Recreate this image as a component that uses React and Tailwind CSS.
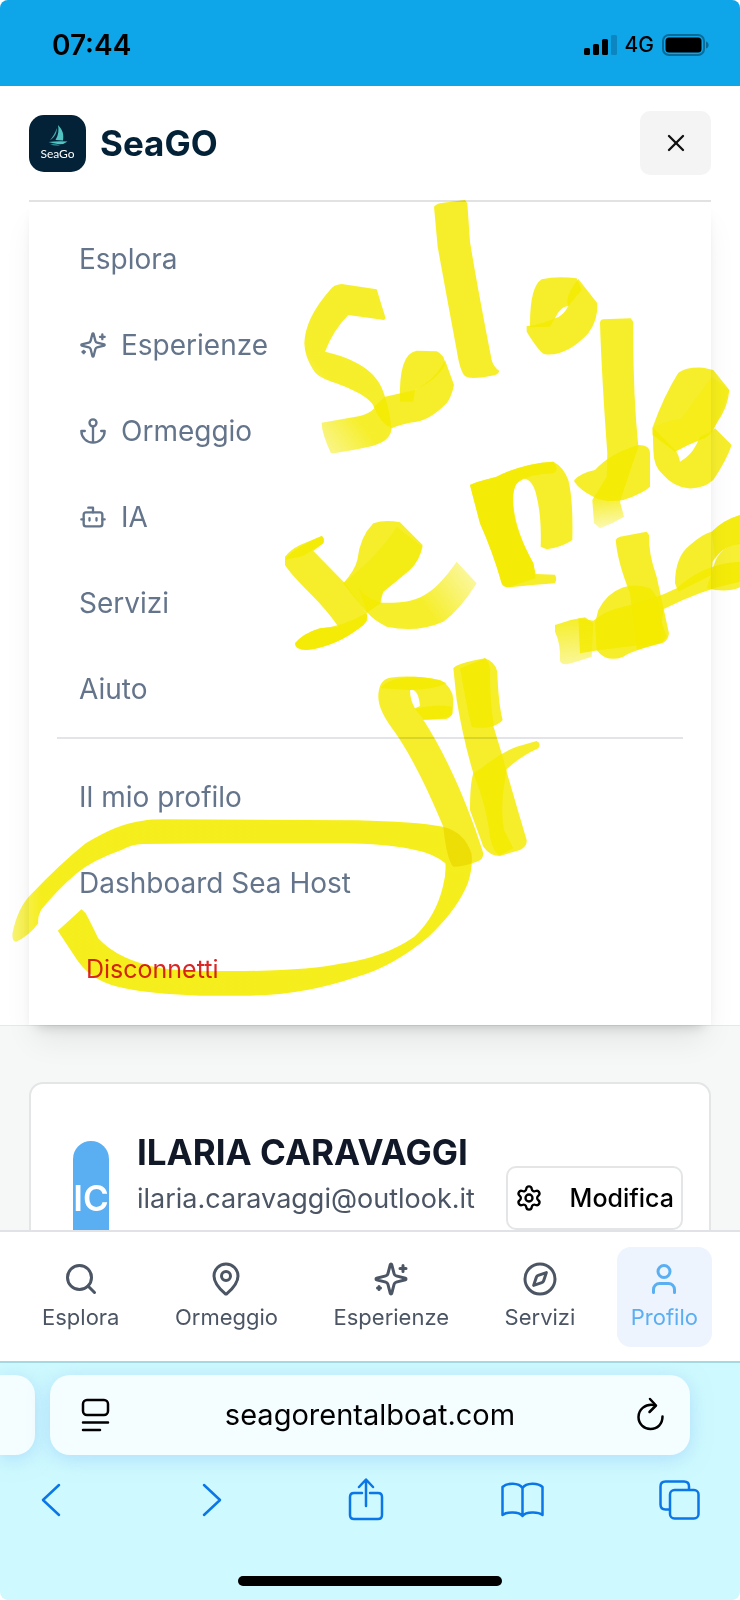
import React from "react";
import { Search, MapPin, Compass, User, Settings, X } from "lucide-react";

const PRIMARY_LINKS = [
  { label: "Esplora" },
  { label: "Esperienze", icon: SparklesIcon },
  { label: "Ormeggio", icon: AnchorIcon },
  { label: "IA", icon: BotIcon },
  { label: "Servizi" },
  { label: "Aiuto" },
];

const ACCOUNT_LINKS = [{ label: "Il mio profilo" }, { label: "Dashboard Sea Host" }];

const TABS = [
  { label: "Esplora", icon: Search },
  { label: "Ormeggio", icon: MapPin },
  { label: "Esperienze", icon: SparklesIcon },
  { label: "Servizi", icon: Compass },
  { label: "Profilo", icon: User, active: true },
];

function LineIcon({ className, children }) {
  return (
    <svg className={className} viewBox="0 0 24 24" fill="none" stroke="currentColor" strokeWidth="2" strokeLinecap="round" strokeLinejoin="round" aria-hidden="true">
      {children}
    </svg>
  );
}

function BotIcon({ className }) {
  return (
    <LineIcon className={className}>
      <path d="M12 8V4H8" />
      <rect x="4" y="8" width="16" height="12" rx="2" />
      <path d="M2 14h2M20 14h2M15 13v2M9 13v2" />
    </LineIcon>
  );
}

function AnchorIcon({ className }) {
  return (
    <LineIcon className={className}>
      <path d="M12 22V8M5 12H2a10 10 0 0 0 20 0h-3" />
      <circle cx="12" cy="5" r="3" />
    </LineIcon>
  );
}

function SparklesIcon({ className }) {
  return (
    <LineIcon className={className}>
      <path d="M9.937 15.500A2 2 0 0 0 8.500 14.063l-6.135-1.582a.5.5 0 0 1 0-.962L8.500 9.936A2 2 0 0 0 9.937 8.500l1.582-6.135a.5.5 0 0 1 .963 0L14.063 8.500A2 2 0 0 0 15.500 9.937l6.135 1.581a.5.5 0 0 1 0 .964L15.500 14.063a2 2 0 0 0-1.437 1.437l-1.582 6.135a.5.5 0 0 1-.963 0z" />
      <path d="M20 3v4M22 5h-4M4 17v2M5 18H3" />
    </LineIcon>
  );
}

function StatusBar() {
  return (
    <div className="flex h-[86px] shrink-0 items-center justify-between bg-[#0ea5e9] pt-1 pr-[31px] pl-[52px] text-black">
      <span className="text-[28px] leading-8 font-semibold">07:44</span>
      <div className="flex items-center gap-2">
        <svg className="h-5 w-[33px]" viewBox="0 0 33 20" aria-hidden="true">
          <rect x="0" y="13" width="6" height="7" rx="1.5" />
          <rect x="9" y="9" width="6" height="11" rx="1.5" />
          <rect x="18" y="4" width="6" height="16" rx="1.5" />
          <rect x="27" y="0" width="6" height="20" rx="1.5" fill="#0b86c0" />
        </svg>
        <span className="text-[21px] leading-6 font-medium">4G</span>
        <svg className="h-[22px] w-[47px]" viewBox="0 0 47 22" aria-hidden="true">
          <rect x="1" y="1" width="41" height="20" rx="6" fill="none" stroke="#0a6a98" strokeWidth="2" />
          <rect x="3.5" y="3.5" width="36" height="15" rx="3.5" />
          <path d="M44 7.500c3.500 1 3.500 6 0 7z" fill="#0a6a98" />
        </svg>
      </div>
    </div>
  );
}

function Logo() {
  return (
    <span className="flex size-[57px] flex-col items-center rounded-[15px] bg-[#032238] pt-[10px]">
      <svg className="h-[21px] w-5" viewBox="0 0 20 21" aria-hidden="true">
        <path d="M10 0C15 5 16 10 15 15.500L7.500 15C10.500 10 11 5 10 0Z" fill="#52c3c3" />
        <path d="M8.800 3C9 8 7 12 2 15.200C4.500 12 7.500 8 8.800 3Z" fill="#41abb2" />
        <path d="M0.500 17Q9 16 19.500 16.500Q16 19.500 11 19.200Q5 18.500 0.500 17Z" fill="#52c3c3" />
        <path d="M2 19.500Q8 19 12 20.200Q7 21 2 19.500Z" fill="#41abb2" />
      </svg>
      <span className="font-['Lato',sans-serif] text-[12px] leading-4 font-normal text-white">SeaGo</span>
    </span>
  );
}

function MenuLink({ label, icon: Icon }) {
  return (
    <li>
      <a href="#" className="flex h-[86px] items-center gap-[14px] pl-[22px] text-[28px] leading-10 text-[#64748b]">
        {Icon && <Icon className="size-7" />}
        {label}
      </a>
    </li>
  );
}

function Menu() {
  return (
    <nav className="mx-[29px] border-t-2 border-[#e2e2e2] bg-white px-7 pt-[14px] pb-[13px] shadow-[0_20px_30px_-6px_rgba(0,0,0,0.08),0_8px_12px_-8px_rgba(0,0,0,0.22)]">
      <ul>
        {PRIMARY_LINKS.map((l) => <MenuLink key={l.label} {...l} />)}
      </ul>
      <ul className="mt-[5px] border-t-2 border-[#e2e4e8] pt-[15px]">
        {ACCOUNT_LINKS.map((l) => <MenuLink key={l.label} {...l} />)}
        <li>
          <button type="button" className="flex h-[86px] w-full items-center pl-[29px] text-left text-[25px] leading-8 text-[#dc2626]">
            Disconnetti
          </button>
        </li>
      </ul>
    </nav>
  );
}

function ProfileCard() {
  return (
    <section className="mx-[29px] mt-14 flex rounded-[14px] border-2 border-[#e3e5e7] bg-white pt-[57px] pr-[26px] pb-14 pl-[42px]">
      <div className="flex h-[114px] w-9 shrink-0 items-center justify-center rounded-full bg-[#5aaef2] text-[35px] leading-10 font-semibold text-white">
        IC
      </div>
      <div className="ml-7 min-w-0 flex-1">
        <h1 className="-mt-3 truncate text-[35px] leading-[46px] font-bold text-[#111827]">ILARIA CARAVAGGI</h1>
        <p className="text-[27px] leading-[48px] text-[#4b5563]">ilaria.caravaggi@outlook.it</p>
      </div>
      <button type="button" className="mt-[25px] flex h-16 w-[177px] shrink-0 items-center justify-between rounded-[10px] border-2 border-[#e3e5e7] px-[7px] text-[25px] leading-8 font-medium text-black">
        <Settings className="size-7" strokeWidth={2} />
        Modifica
      </button>
    </section>
  );
}

function TabBar() {
  return (
    <nav className="z-10 flex h-[131px] shrink-0 items-center justify-between border-t-2 border-[#e0e2e5] bg-white px-7">
      {TABS.map(({ label, icon: Icon, active }) => (
        <a
          key={label}
          href="#"
          className={
            "flex h-[100px] flex-col items-center rounded-[14px] px-[14px] pt-[14px] text-[22px] leading-8 " +
            (active ? "bg-[#edf4fe] text-[#5aaef2]" : "text-[#4b5563]")
          }
        >
          <Icon className="mb-1 size-9" />
          {label}
        </a>
      ))}
    </nav>
  );
}

function ToolButton({ label, children }) {
  return (
    <button type="button" aria-label={label} className="text-[#0a76e8]">
      <svg className="size-11" viewBox="0 0 44 44" fill="none" stroke="currentColor" strokeWidth="2.500" strokeLinecap="round" strokeLinejoin="round" aria-hidden="true">
        {children}
      </svg>
    </button>
  );
}

function BrowserBar() {
  return (
    <footer className="z-10 h-[239px] shrink-0 overflow-hidden rounded-b-[8px] border-t-2 border-[#a4d9e2] bg-[#cef9fe]">
      <div className="flex h-[92px] items-end gap-[15px] pr-[50px]">
        <div className="h-20 w-[35px] rounded-r-[20px] bg-[#f4fdff] shadow-[0_4px_20px_rgba(150,200,250,0.55)]" />
        <div className="flex h-20 flex-1 items-center justify-between rounded-[20px] bg-[#f4fdff] px-6 shadow-[0_4px_20px_rgba(150,200,250,0.55)]">
          <button type="button" aria-label="Page menu" className="flex w-9 justify-end">
            <svg className="h-9 w-[30px]" viewBox="0 0 30 36" fill="none" stroke="#000" strokeWidth="2.500" strokeLinecap="round" aria-hidden="true">
              <rect x="3" y="3" width="25" height="15" rx="4" />
              <path d="M3 25.500h25M3 33h17" />
            </svg>
          </button>
          <span className="text-[29px] leading-8 text-black">seagorentalboat.com</span>
          <button type="button" aria-label="Reload" className="flex w-9 justify-end">
            <svg className="h-9 w-[30px]" viewBox="0 0 30 36" fill="none" stroke="#000" strokeWidth="2.500" strokeLinecap="round" strokeLinejoin="round" aria-hidden="true">
              <path d="M19 8.200C9 6 2.500 13 2.500 20C2.500 27 8 32 14.500 32C21.500 32 26.500 27 26.500 19.500" />
              <path d="M14 2L20 8.500L13.500 15" />
            </svg>
          </button>
        </div>
      </div>
      <div className="flex items-center justify-between pt-[23px] pr-[38px] pl-[29px]">
        <ToolButton label="Back"><path d="M30 7L14 22L30 37" /></ToolButton>
        <ToolButton label="Forward"><path d="M18 7L34 22L18 37" /></ToolButton>
        <ToolButton label="Share">
          <path d="M18 15H10Q6 15 6 19V37Q6 41 10 41H34Q38 41 38 37V19Q38 15 34 15H26" />
          <path d="M22 28V2M15 9L22 1.500L29 9" />
        </ToolButton>
        <ToolButton label="Bookmarks">
          <path d="M21.500 10C18 4.500 6 4.500 1.500 9V37C6 33.500 18 33.500 21.500 38C25 33.500 37 33.500 41.500 37V9C37 4.500 25 4.500 21.500 10ZM21.500 10V37" />
        </ToolButton>
        <ToolButton label="Tabs">
          <rect x="12" y="12" width="28.500" height="28.500" rx="4.500" />
          <path d="M11 31.500H7.500Q2.500 31.500 2.500 26.500V8.500Q2.500 3.500 7.500 3.500H26Q31 3.500 31 8.500V11" />
        </ToolButton>
      </div>
      <div className="mx-auto mt-[54px] h-[10px] w-[264px] rounded-full bg-black" />
    </footer>
  );
}

function MarkerNotes() {
  return (
    <svg className="pointer-events-none absolute inset-0 z-20 h-full w-full mix-blend-multiply" viewBox="0 0 740 1600" preserveAspectRatio="xMidYMin meet" aria-hidden="true">
      <defs>
        <linearGradient id="fade" x1="0" x2="1" y1="0.400" y2="0">
          <stop offset="0.400" stopColor="#f4eb00" />
          <stop offset="1" stopColor="#f4eb00" stopOpacity="0.350" />
        </linearGradient>
        <linearGradient id="fade-s" gradientUnits="userSpaceOnUse" x1="165" y1="750" x2="300" y2="650">
          <stop offset="0" stopColor="#f4eb00" stopOpacity="0.600" />
          <stop offset="0.700" stopColor="#f4eb00" />
        </linearGradient>
        <linearGradient id="fade-d" gradientUnits="userSpaceOnUse" x1="1010" y1="1015" x2="1000" y2="920">
          <stop offset="0" stopColor="#f4eb00" stopOpacity="0.350" />
          <stop offset="1" stopColor="#f4eb00" />
        </linearGradient>
        <linearGradient id="fade-t" gradientUnits="userSpaceOnUse" x1="900" y1="640" x2="890" y2="510">
          <stop offset="0" stopColor="#f4eb00" stopOpacity="0.500" />
          <stop offset="1" stopColor="#f4eb00" />
        </linearGradient>
        <linearGradient id="fade-loop" gradientUnits="userSpaceOnUse" x1="30" y1="0" x2="115" y2="0">
          <stop offset="0" stopColor="#f5ed14" stopOpacity="0.600" />
          <stop offset="1" stopColor="#f5ed14" />
        </linearGradient>
      </defs>
      <g fill="#f4eb00" fillOpacity="0.83">
        <g transform="translate(270 190) scale(0.33333)">
          <path fill="url(#fade-s)" d="M347 385L320 298L215 282Q190 284 180 300Q105 385 103 460Q104 500 130 540Q140 560 185 575C260 600 310 630 313 655Q300 670 270 678L155 698Q155 730 183 790Q200 790 290 772C340 762 360 745 365 718C360 660 345 620 345 620C325 540 250 505 165 485Q190 420 235 375L342 390Z" />
          <path d="M390 635Q385 490 440 482L500 484Q525 495 525 525Q500 570 435 600L430 635Z" />
          <path d="M345 620L435 600Q500 565 525 510L552 585Q545 620 530 640Q480 690 440 695Q400 700 365 715Q330 700 312 650Z" />
          <path d="M492 50Q500 40 520 38L585 30L592 40L600 155Q620 280 665 510Q670 530 688 543Q685 555 665 557Q600 570 585 558Q570 545 560 480Q530 320 503 170Z" />
          <path d="M780 402Q780 290 815 268Q860 258 920 265L935 300L895 348Q870 350 855 385L840 410L780 412Z" />
          <path d="M770 408Q800 408 855 385Q880 378 895 348Q882 320 925 267L982 340Q985 390 955 430Q890 500 825 493Q810 490 770 425Z" />
          <path fill="url(#fade-d)" d="M990 398Q992 388 1000 388L1082 385L1090 395Q1088 600 1105 770L1050 935L1062 980Q1030 1000 990 1015L972 1000L967 930L1010 860L1012 790Q995 560 990 398Z" />
          <path d="M913 870Q930 850 975 840Q1020 790 1105 765Q1140 765 1140 790L1140 890Q1120 910 1060 930Q1010 940 970 920Q930 900 913 875Z" />
          <path d="M1148 712Q1180 620 1225 548Q1250 530 1300 533L1330 540L1378 600Q1375 650 1340 700Q1320 745 1290 750Q1250 765 1215 785L1148 735Z" />
          <path d="M1148 712L1215 780Q1225 790 1230 815Q1262 798 1280 762L1290 740Q1320 730 1335 715L1385 765Q1370 810 1330 870Q1300 897 1255 895Q1210 890 1180 855Q1150 830 1150 780Z" />
          <path fillOpacity="0.4" d="M1148 712Q1200 690 1235 685L1325 560L1378 600L1340 700Q1320 745 1290 750Q1250 765 1215 785L1148 735Z" />
        </g>
        <g transform="translate(270 450) scale(0.33333)">
          <path d="M45 320Q60 300 90 285L155 258Q165 265 160 280L130 303L225 400L290 490Q295 505 280 525Q200 590 110 600Q75 600 75 580Q100 550 150 535L205 530Q170 480 120 430Q60 370 45 345Z" />
          <path d="M45 330Q60 300 155 258Q165 265 160 280L100 318Z" />
          <path d="M75 580Q100 550 150 535Q220 530 288 490Q300 510 280 525Q200 590 110 600Q75 600 75 580Z" />
          <path d="M220 400Q255 360 262 330Q270 260 310 220Q345 207 390 217L458 285Q450 330 420 360Q360 410 340 425L330 460L290 490Z" />
          <path fillOpacity="0.5" d="M220 400Q330 310 380 230L458 290Q450 330 420 358L340 425Q330 440 335 460L290 485Q250 440 220 400Z" />
          <path fill="url(#fade)" d="M262 400Q270 440 335 458C430 460 480 450 560 335L620 400Q570 480 520 515Q440 550 350 530Q310 510 290 485Z" />
          <path d="M600 105Q610 98 680 80Q760 40 850 35Q880 50 895 90Q910 150 907 270Q880 290 830 298L812 290Q815 200 800 140Q790 90 760 85Q725 100 730 160Q735 240 790 340L797 372L855 374Q862 385 855 400Q790 405 720 412Q700 412 695 400Q670 310 630 220Z" />
          <path d="M600 105Q610 98 680 80Q760 40 850 35Q870 60 850 70Q780 70 740 100Q725 120 730 180Q735 240 790 340L797 385L715 412Q700 412 695 400Q670 310 630 220Z" />
          <path d="M1037 270Q1040 262 1050 260L1130 245L1137 255Q1135 310 1160 380L1197 550Q1195 570 1180 578L1100 600L1080 430Q1040 330 1037 265Z" />
          <path d="M985 480Q1010 430 1060 412Q1100 400 1140 415Q1170 440 1170 500L1190 560L1175 578Q1090 600 1060 620Q1030 632 1005 622Q990 615 980 600L975 520Z" />
          <path d="M925 505L970 512Q1010 480 1060 470Q1150 450 1220 415Q1300 340 1410 335L1410 395Q1290 420 1180 478L1170 578L990 600L930 610Z" />
          <path fill="url(#fade-t)" d="M855 525Q900 508 945 502L970 520L965 620Q920 635 890 643Q870 643 870 630Q872 580 855 545Z" />
          <path d="M1215 400Q1215 320 1260 285Q1300 250 1325 245Q1360 210 1410 195L1410 282Q1360 285 1328 335L1325 375L1225 425Z" />
          <path fillOpacity="0.6" d="M1325 245Q1360 210 1410 195L1410 282Q1360 285 1335 325Z" />
          <path fillOpacity="0.8" d="M1335 335Q1355 287 1410 278L1410 412Q1370 430 1310 415Z" />
        </g>
        <g transform="translate(300 640) scale(0.33333)">
          <path fillRule="evenodd" d="M235 170Q235 120 270 113Q340 103 420 120Q458 140 460 180L458 220Q450 238 430 238L370 240C430 330 500 480 550 640Q550 660 530 665Q490 680 460 680Q440 660 430 560C380 440 330 340 280 270Q235 210 235 170ZM330 150Q355 145 360 198L345 205Q330 180 330 150Z" />
          <path d="M245 140Q270 113 340 110Q400 110 440 130Q400 150 330 150L245 145Z" />
          <path d="M345 207Q400 190 455 200L455 225Q440 238 370 238Z" />
          <path d="M460 85Q470 70 555 55Q585 65 592 95Q595 190 608 240Q600 250 580 258L605 340L620 395Q650 500 680 600Q682 620 660 630L600 648Q570 648 550 620L510 510Q510 430 520 400Q490 300 470 180Z" />
          <path d="M480 85L555 55Q570 65 570 95Q570 190 582 258Q550 268 515 262Q500 200 480 85Z" />
          <path d="M520 400L550 380Q600 340 650 320L710 303Q725 310 715 325Q660 350 620 388L615 420Q600 500 612 570L640 625L600 645Q580 640 570 590Q560 500 520 400Z" />
        </g>
      </g>
      <g className="mix-blend-multiply" fill="url(#fade-loop)" fillOpacity="0.96" transform="translate(0 640) scale(0.35714 0.33333)">
        <path d="M35 880Q50 800 90 760Q170 670 240 610Q330 550 400 542Q420 538 460 538L1000 541Q1160 545 1240 560Q1300 575 1320 640Q1325 680 1310 730Q1280 810 1200 890Q1100 980 1000 1010Q850 1065 700 1067L560 1067Q400 1060 330 1040Q250 1020 210 950L162 872L228 808L240 820Q255 850 275 895Q330 960 450 985Q520 995 620 993Q850 995 960 970Q1080 950 1160 890Q1220 830 1240 740Q1250 700 1247 670Q1215 640 1150 627Q1080 612 960 610L600 610L400 612Q370 612 340 630Q260 660 215 700Q160 750 115 810Q105 830 107 850Q80 890 45 905Q33 905 35 880Z" />
      </g>
    </svg>
  );
}

export default function App() {
  return (
    <div className="relative isolate flex h-screen flex-col overflow-hidden rounded-[8px] bg-[#f6f8f8] font-['Inter',sans-serif]">
      <StatusBar />
      <main className="min-h-0 flex-1 overflow-hidden">
        <div className="border-b border-[#e5e7eb] bg-white">
          <header className="flex h-[114px] items-center justify-between px-[29px]">
            <a href="#" className="flex items-center gap-[14px] text-[35px] leading-10 font-bold text-[#032238]">
              <Logo />
              SeaGO
            </a>
            <button type="button" aria-label="Chiudi menu" className="flex h-16 w-[71px] items-center justify-center rounded-[10px] bg-[#f4f4f5] text-[#111]">
              <X className="size-7" strokeWidth={2} />
            </button>
          </header>
          <Menu />
        </div>
        <ProfileCard />
      </main>
      <TabBar />
      <BrowserBar />
      <MarkerNotes />
    </div>
  );
}
